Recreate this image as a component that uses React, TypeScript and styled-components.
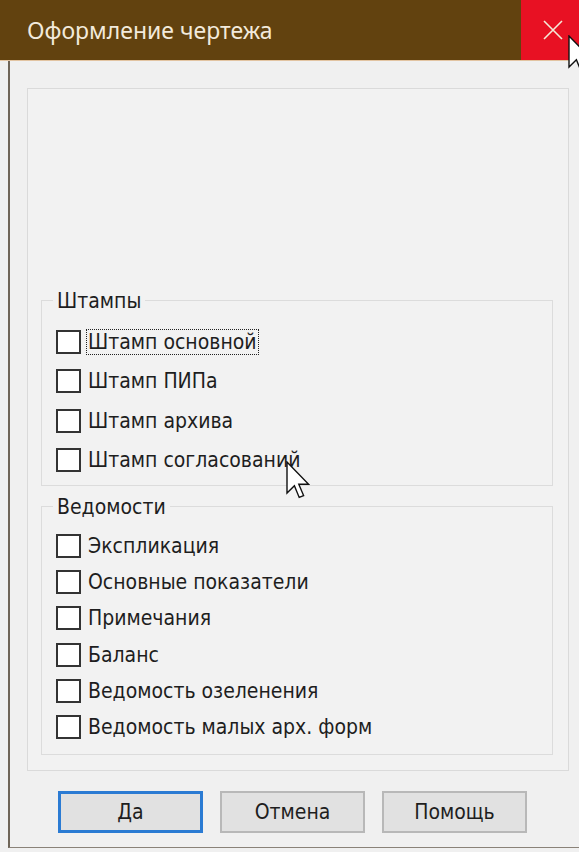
import styled, { createGlobalStyle } from "styled-components";

const GlobalStyle = createGlobalStyle`
  html, body {
    margin: 0;
    padding: 0;
    background: #f0f0f0;
  }
  * { box-sizing: border-box; }
`;

const Window = styled.div`
  position: relative;
  width: 579px;
  height: 852px;
  overflow: hidden;
  background: #f0f0f0;
  font-family: "DejaVu Sans Condensed", "DejaVu Sans", sans-serif;
  color: #1e1e1e;
`;

const TitleBar = styled.div`
  display: flex;
  align-items: center;
  height: 61px;
  background: #62420f;
  border-bottom: 1px solid #e2c4a2;
`;

const Title = styled.span`
  flex: 1;
  padding-left: 27px;
  padding-bottom: 1px;
  font-family: "Noto Sans", "Open Sans", sans-serif;
  font-size: 23px;
  color: #f2eadc;
`;

const CloseButton = styled.div`
  display: flex;
  align-items: center;
  justify-content: center;
  width: 58px;
  height: 60px;
  background: #e81123;
  padding-left: 6px;
`;

const Frame = styled.div`
  margin-left: 8px;
  height: 787px;
  border-left: 2px solid #6f6558;
  border-bottom: 1px solid #8a8278;
  padding: 27px 0 0 17px;
  display: flex;
  flex-direction: column;
`;

const Panel = styled.div`
  width: 542px;
  height: 683px;
  border: 1px solid #dadada;
  background: #f2f2f2;
  display: flex;
  flex-direction: column;
  justify-content: flex-end;
  gap: 9px;
  padding: 0 15px 15px 13px;
`;

const Group = styled.fieldset<{ $top: number; $bottom: number }>`
  margin: 0;
  border: 1px solid #dcdcdc;
  padding: ${(p) => p.$top}px 0 ${(p) => p.$bottom}px 11px;
  min-width: 0;
`;

const Legend = styled.legend`
  padding: 0 4px;
  font-size: 21px;
  line-height: 24px;
  color: #1e1e1e;
`;

const Row = styled.label<{ $height: number }>`
  display: flex;
  align-items: center;
  height: ${(p) => p.$height}px;
  margin-left: 3px;
  gap: 5px;
  font-size: 21px;
`;

const Box = styled.span`
  width: 25px;
  height: 24px;
  border: 2px solid #333;
  background: #fff;
  flex-shrink: 0;
`;

const Text = styled.span<{ $focused?: boolean }>`
  padding: 0 1px;
  line-height: 24px;
  border: 1px dotted ${(p) => (p.$focused ? "#222" : "transparent")};
`;

const Buttons = styled.div`
  display: flex;
  gap: 17px;
  padding: 20px 0 0 31px;
`;

const Button = styled.button<{ $default?: boolean }>`
  width: 145px;
  height: 42px;
  font-family: "DejaVu Sans Condensed", "DejaVu Sans", sans-serif;
  font-size: 21px;
  color: #1e1e1e;
  background: #e1e1e1;
  border: ${(p) => (p.$default ? "3px solid #2b7bd3" : "2px solid #b8b8b8")};
  padding: 0;
`;

const Cursor = styled.svg<{ $x: number; $y: number }>`
  position: absolute;
  left: ${(p) => p.$x}px;
  top: ${(p) => p.$y}px;
  width: 24px;
  height: 38px;
`;

const stamps = ["Штамп основной", "Штамп ПИПа", "Штамп архива", "Штамп согласований"];
const lists = [
  "Экспликация",
  "Основные показатели",
  "Примечания",
  "Баланс",
  "Ведомость озеленения",
  "Ведомость малых арх. форм",
];

const Arrow = ({ x, y }: { x: number; y: number }) => (
  <Cursor $x={x} $y={y} viewBox="0 0 12 19">
    <path
      d="M0.5 0.5 L0.5 16 L4.2 12.4 L6.6 18.2 L8.8 17.3 L6.4 11.6 L11.3 11.6 Z"
      fill="#fff"
      stroke="#111"
      strokeWidth="0.7"
      strokeLinejoin="miter"
    />
  </Cursor>
);

export default function App() {
  return (
    <Window>
      <GlobalStyle />
      <TitleBar>
        <Title>Оформление чертежа</Title>
        <CloseButton>
          <svg width="20" height="20" viewBox="0 0 20 20">
            <path d="M1 1 L19 19 M19 1 L1 19" stroke="#f4ead8" strokeWidth="1.6" />
          </svg>
        </CloseButton>
      </TitleBar>
      <Frame>
        <Panel>
          <Group $top={9} $bottom={5}>
            <Legend>Штампы</Legend>
            {stamps.map((s, i) => (
              <Row key={s} $height={39.5}>
                <Box />
                <Text $focused={i === 0}>{s}</Text>
              </Row>
            ))}
          </Group>
          <Group $top={9} $bottom={9}>
            <Legend>Ведомости</Legend>
            {lists.map((s) => (
              <Row key={s} $height={36.2}>
                <Box />
                <Text>{s}</Text>
              </Row>
            ))}
          </Group>
        </Panel>
        <Buttons>
          <Button $default>Да</Button>
          <Button>Отмена</Button>
          <Button>Помощь</Button>
        </Buttons>
      </Frame>
      <Arrow x={286} y={461} />
      <Arrow x={568} y={35} />
    </Window>
  );
}
